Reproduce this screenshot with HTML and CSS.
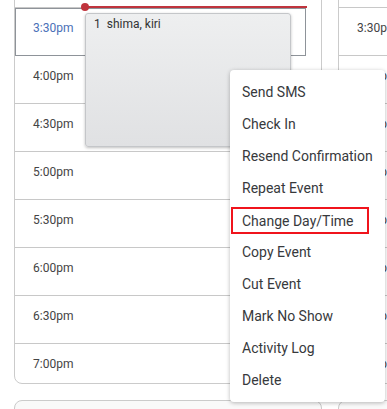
FILE: index.html
```html
<!DOCTYPE html>
<html lang="en">
<head>
    <meta charset="UTF-8">
    <meta name="viewport" content="width=device-width, initial-scale=1.0">
    <title>Schedule</title>
    <link rel="stylesheet" href="styles.css">
</head>
<body>
    <div class="board">
        <div class="column">
            <div class="panel panel-left">
                <div class="slot"><span class="time">3:00pm</span></div>
                <div class="slot slot-selected">
                    <span class="time time-now">3:30pm</span>
                    <div class="now-line"></div>
                    <div class="event">1&nbsp; shima, kiri</div>
                </div>
                <div class="slot"><span class="time">4:00pm</span></div>
                <div class="slot"><span class="time">4:30pm</span></div>
                <div class="slot"><span class="time">5:00pm</span></div>
                <div class="slot"><span class="time">5:30pm</span></div>
                <div class="slot"><span class="time">6:00pm</span></div>
                <div class="slot"><span class="time">6:30pm</span></div>
                <div class="slot slot-last"><span class="time">7:00pm</span></div>
            </div>
            <div class="panel panel-next"></div>
        </div>
        <div class="column">
            <div class="panel panel-right">
                <div class="slot"><span class="time">3:00pm</span></div>
                <div class="slot"><span class="time">3:30pm</span></div>
                <div class="slot"><span class="time">4:00pm</span></div>
                <div class="slot"><span class="time">4:30pm</span></div>
                <div class="slot"><span class="time">5:00pm</span></div>
                <div class="slot"><span class="time">5:30pm</span></div>
                <div class="slot"><span class="time">6:00pm</span></div>
                <div class="slot"><span class="time">6:30pm</span></div>
                <div class="slot slot-last"><span class="time">7:00pm</span></div>
            </div>
            <div class="panel panel-next"></div>
        </div>
    </div>

    <ul class="context-menu">
        <li class="menu-item">Send SMS</li>
        <li class="menu-item">Check In</li>
        <li class="menu-item">Resend Confirmation</li>
        <li class="menu-item">Repeat Event</li>
        <li class="menu-item menu-item-marked">Change Day/Time</li>
        <li class="menu-item">Copy Event</li>
        <li class="menu-item">Cut Event</li>
        <li class="menu-item">Mark No Show</li>
        <li class="menu-item">Activity Log</li>
        <li class="menu-item">Delete</li>
    </ul>
</body>
</html>
```

FILE: styles.css
```css
body {
    font-family: Roboto, 'Liberation Sans', sans-serif;
    background: #ffffff;
    margin: 0;
    overflow: hidden;
}

.board {
    display: grid;
    grid-template-columns: 308px 1fr;
    column-gap: 16px;
    padding-left: 14px;
    margin-top: -41px;
}

.column {
    display: flex;
    flex-direction: column;
    gap: 16px;
}

.panel {
    border: 1px solid #cbcbcb;
    border-radius: 8px;
    background: #ffffff;
}

.panel-left {
    padding-right: 15px;
}

.panel-right {
    border-right: none;
    border-radius: 8px 0 0 8px;
}

.panel-next {
    height: 60px;
    background: #f9f9f9;
}

.slot {
    position: relative;
    height: 47px;
    border-bottom: 1px solid #c8c8c8;
}

.slot-last {
    height: 39px;
    border-bottom: none;
}

.slot-selected {
    outline: 1px solid #8e9399;
    outline-offset: -1px;
}

.time {
    display: block;
    padding: 13px 0 0 18px;
    font-size: 12px;
    line-height: 14px;
    color: #444444;
}

.time-now {
    color: #4a70b7;
}

.now-line {
    position: absolute;
    top: -2px;
    left: 70px;
    right: -1px;
    height: 2px;
    background: #c0343d;
}

.now-line::before {
    content: "";
    position: absolute;
    left: -4px;
    top: -3px;
    width: 8px;
    height: 8px;
    border-radius: 50%;
    background: #c0343d;
}

.event {
    position: absolute;
    z-index: 2;
    top: 5px;
    left: 70px;
    width: 192px;
    height: 126px;
    padding: 3px 4px 3px 8px;
    font-size: 12px;
    line-height: 14px;
    color: #333333;
    background: linear-gradient(to bottom, #eeeff0, #e0e1e3);
    border: 1px solid #c4c6c9;
    border-radius: 3px;
    box-shadow: 0 1px 3px rgba(0,0,0,0.25);
}

.context-menu {
    position: absolute;
    z-index: 5;
    top: 70px;
    left: 230px;
    width: 155px;
    margin: 0;
    padding: 6px 0;
    list-style: none;
    background: #ffffff;
    border-radius: 4px;
    box-shadow: 0 1px 4px rgba(0,0,0,0.28);
}

.menu-item {
    height: 32px;
    padding-left: 12px;
    font-size: 14px;
    line-height: 33px;
    color: #37393c;
}

.menu-item-marked {
    height: 23px;
    margin: 3px 16px 2px 1px;
    padding-left: 9px;
    line-height: 24px;
    border: 2px solid #f0141c;
}
```
